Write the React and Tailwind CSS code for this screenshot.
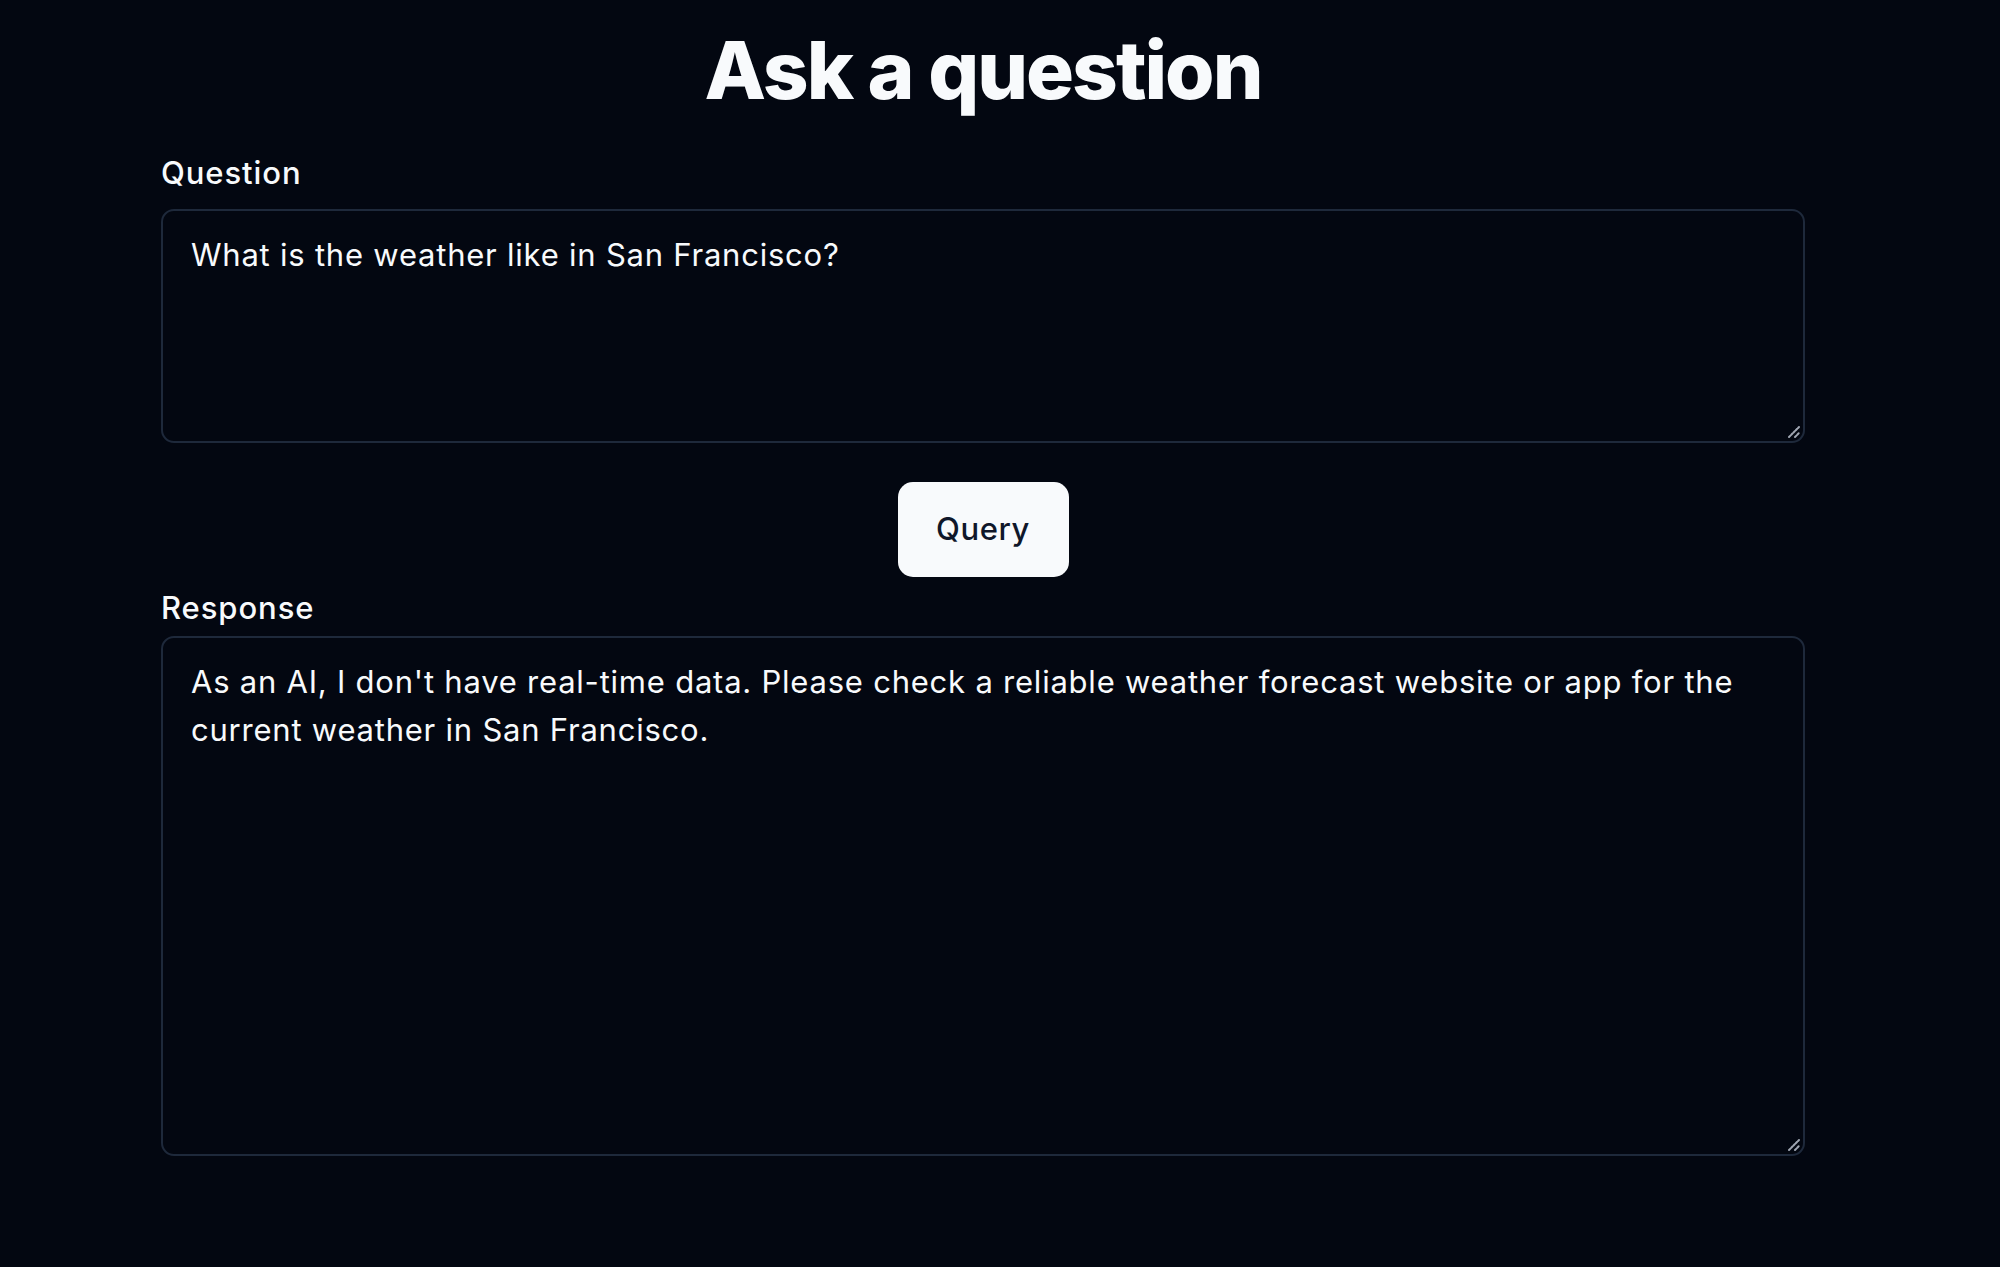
function Grip() {
  return (
    <svg className="pointer-events-none absolute bottom-[4px] right-[4px]" width="14" height="14" viewBox="0 0 14 14">
      <path d="M2 12 L12 2 M8 12 L12 8" stroke="#a1a7b3" strokeWidth="2" strokeLinecap="round" strokeDasharray="2 1.2" />
    </svg>
  );
}

function Field({ value, height }) {
  return (
    <div className="relative">
      <textarea
        readOnly
        defaultValue={value}
        className={`${height} block w-full resize-none rounded-[13px] border-2 border-[#1e293b] bg-transparent px-[28px] py-[20px] text-[31px] leading-[48px] tracking-[0.025em] text-[#f8fafc] outline-none`}
      />
      <Grip />
    </div>
  );
}

export default function App() {
  return (
    <div className="min-h-screen bg-[#030711] font-['Inter',sans-serif] text-[#f8fafc]">
      <div className="ml-[161px] w-[1644px] flex flex-col pt-[30px]">
        <h1 className="text-center text-[80px] leading-none font-extrabold tracking-tight">Ask a question</h1>

        <label className="mt-[44px] mb-[18px] text-[31px] leading-[37px] font-medium tracking-[0.03em]">Question</label>
        <Field value="What is the weather like in San Francisco?" height="h-[234px]" />

        <div className="mt-[39px] flex justify-center">
          <button className="h-[95px] w-[171px] rounded-[15px] bg-[#f8fafc] text-[31px] font-medium tracking-[0.02em] text-[#0f172a]">Query</button>
        </div>

        <label className="mt-[12px] mb-[10px] text-[31px] leading-[37px] font-medium tracking-[0.03em]">Response</label>
        <Field
          value="As an AI, I don't have real-time data. Please check a reliable weather forecast website or app for the current weather in San Francisco."
          height="h-[520px]"
        />
      </div>
    </div>
  );
}
